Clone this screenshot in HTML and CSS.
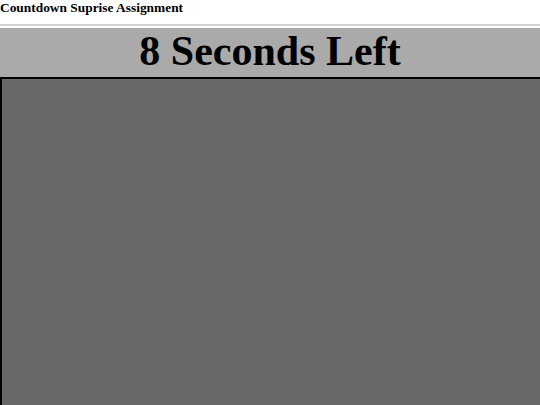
FILE: index.html
```html
<!DOCTYPE html>
<html>
<head>
<meta charset="utf-8">
<link rel="stylesheet" href="styles.css">
</head>
<body>
<div class="page">
  <div class="title">Countdown Suprise Assignment</div>
  <div class="rule"></div>
  <div class="banner">8 Seconds Left</div>
  <div class="stage"></div>
</div>
</body>
</html>
```
FILE: styles.css
```css
html, body {
  margin: 0;
  padding: 0;
  background: #ffffff;
  overflow: hidden;
}
.page {
  display: flex;
  flex-direction: column;
  height: 405px;
  font-family: "Liberation Serif", "Times New Roman", serif;
}
.title {
  font-weight: bold;
  font-size: 13.4px;
  line-height: 16px;
  color: #000;
  height: 16px;
}
.rule {
  margin-top: 8px;
  height: 0;
  border-top: 2px solid #d3d3d3;
}
.banner {
  margin-top: 2px;
  height: 49px;
  background: #aaaaaa;
  color: #000;
  font-weight: bold;
  font-size: 42px;
  line-height: 46px;
  text-align: center;
}
.stage {
  flex: 1;
  background: #696969;
  border-top: 2px solid #000;
  border-left: 2px solid #000;
}
```
